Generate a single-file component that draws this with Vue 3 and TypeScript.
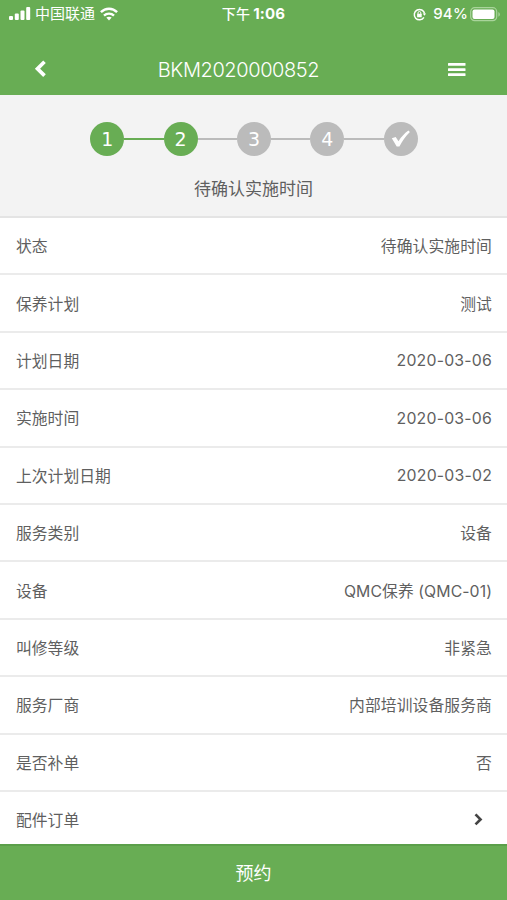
<script setup lang="ts">
interface Row {
  label: string
  value?: string
  link?: boolean
}

const steps: string[] = ['1', '2', '3', '4', 'check']
const current = 2

const rows: Row[] = [
  { label: '状态', value: '待确认实施时间' },
  { label: '保养计划', value: '测试' },
  { label: '计划日期', value: '2020-03-06' },
  { label: '实施时间', value: '2020-03-06' },
  { label: '上次计划日期', value: '2020-03-02' },
  { label: '服务类别', value: '设备' },
  { label: '设备', value: 'QMC保养 (QMC-01)' },
  { label: '叫修等级', value: '非紧急' },
  { label: '服务厂商', value: '内部培训设备服务商' },
  { label: '是否补单', value: '否' },
  { label: '配件订单', link: true },
]

const isDate = (value?: string): boolean => /^\d{4}-/.test(value ?? '')
</script>

<template>
  <div class="screen">
    <header class="top">
      <div class="status">
        <div class="carrier">
          <svg class="signal" width="22" height="14" viewBox="0 0 22 14" fill="#fff">
            <rect x="0" y="9" width="4" height="4" rx="1" />
            <rect x="5.8" y="6.5" width="4" height="6.5" rx="1" />
            <rect x="11.5" y="3.5" width="4" height="9.5" rx="1" />
            <rect x="17.2" y="0" width="4" height="13" rx="1" />
          </svg>
          <span class="operator">中国联通</span>
          <svg class="wifi" width="18" height="14" viewBox="0 0 18 14" fill="none" stroke="#fff" stroke-width="2.4">
            <path d="M.9 5.2C5.5.6 12.5.6 17.1 5.2" />
            <path d="M4 8.6c2.8-2.7 7.2-2.7 10 0" />
            <path d="M6.3 10.6c1.6-1.3 3.8-1.3 5.4 0L9 13.4z" fill="#fff" stroke="none" />
          </svg>
        </div>
        <div class="clock"><span class="period">下午</span><span>1:06</span></div>
        <div class="power">
          <svg width="13" height="13" viewBox="0 0 13 13" fill="none" stroke="#fff">
            <path d="M10.9 9.4A5.2 5.2 0 1 1 11.6 5.7" stroke-width="1.5" />
            <path d="M9.7 5.4h3.3l-1.5 2.4z" fill="#fff" stroke="none" />
            <rect x="4.1" y="5.7" width="4.6" height="3.6" rx=".5" fill="#fff" stroke="none" />
            <path d="M5 6V4.9a1.4 1.4 0 0 1 2.8 0V6" stroke-width="1" />
          </svg>
          <span class="percent">94%</span>
          <svg class="battery" width="31" height="15" viewBox="0 0 31 15">
            <rect x=".7" y=".7" width="26" height="13" rx="4" fill="none" stroke="#a9d49b" stroke-width="1.2" />
            <rect x="2.5" y="2.5" width="22" height="9.5" rx="2" fill="#fff" />
            <path d="M28.4 5v4.8c2-1 2-3.8 0-4.8z" fill="#a9d49b" />
          </svg>
        </div>
      </div>
      <div class="nav">
        <svg width="12" height="18" viewBox="0 0 12 18" fill="none" stroke="#fff" stroke-width="3.7">
          <path d="M10.5 1.8 3.500 8.700l7 6.900" />
        </svg>
        <h1>BKM2020000852</h1>
        <svg width="18" height="15" viewBox="0 0 18 15" fill="#fff">
          <rect y="1" width="17.5" height="2.7" rx=".5" />
          <rect y="6.2" width="17.5" height="2.7" rx=".5" />
          <rect y="11.3" width="17.5" height="2.7" rx=".5" />
        </svg>
      </div>
    </header>

    <section class="progress">
      <div class="steps">
        <template v-for="(step, i) in steps" :key="step">
          <div v-if="i > 0" class="line" :class="{ done: i < current }"></div>
          <div class="dot" :class="{ done: i < current }">
            <svg v-if="step === 'check'" width="20" height="18" viewBox="0 0 20 18" fill="#fff">
              <path d="M.8 8.200 4.700 6.900l2.800 4.300C10.300 7 13.200 3.700 17.400.6l1.500 1.300C14.600 6 11.400 10.800 8.400 16.600H5.700z" />
            </svg>
            <span v-else>{{ step }}</span>
          </div>
        </template>
      </div>
      <p>待确认实施时间</p>
    </section>

    <main class="rows">
      <div v-for="row in rows" :key="row.label" class="row">
        <span>{{ row.label }}</span>
        <svg v-if="row.link" class="chevron" width="9" height="13" viewBox="0 0 9 13" fill="none" stroke="#444" stroke-width="2.7">
          <path d="m1.500 1.400 5 5-5 5" />
        </svg>
        <span v-else class="value" :class="{ date: isDate(row.value) }">{{ row.value }}</span>
      </div>
    </main>

    <button class="book" type="button">预约</button>
  </div>
</template>

<style>
body {
  margin: 0;
  overflow: hidden;
}
</style>

<style scoped>
.screen {
  display: flex;
  flex-direction: column;
  width: 507px;
  height: 900px;
  overflow: hidden;
  background: #fff;
  color: #5f5f5f;
  font-family: Inter, "Noto Sans CJK SC", sans-serif;
}
.top {
  flex: none;
  height: 95px;
  background: #68ad54;
  color: #fff;
}
.status {
  display: grid;
  grid-template-columns: 1fr auto 1fr;
  align-items: center;
  height: 28px;
  padding: 0 6px 0 9px;
  font-size: 15px;
  line-height: 28px;
}
.carrier,
.power,
.clock {
  display: flex;
  align-items: center;
}
.operator {
  margin-left: 4px;
  font-size: 15px;
}
.wifi {
  margin-left: 5px;
}
.clock {
  gap: 3px;
  margin-right: 3px;
  font-weight: 700;
  letter-spacing: 0.2px;
}
.period {
  font-size: 14px;
  font-weight: 500;
}
.power {
  justify-content: flex-end;
}
.percent {
  margin: 0 2px 0 7px;
  font-weight: 500;
  letter-spacing: 0.2px;
}
.nav {
  display: flex;
  align-items: center;
  justify-content: space-between;
  height: 54px;
  margin-top: 14px;
  padding: 0 41px 0 34px;
}
.nav svg {
  flex: none;
}
h1 {
  margin: 1px 17px 0 0;
  font-size: 20px;
  font-weight: 300;
  letter-spacing: -0.4px;
}
.top .nav {
  margin-top: 0;
  padding-top: 14px;
}
.progress {
  flex: none;
  box-sizing: border-box;
  height: 123px;
  padding-top: 27px;
  border-bottom: 2px solid #e4e4e4;
  background: #f3f3f3;
}
.steps {
  display: flex;
  align-items: center;
  justify-content: center;
  padding-left: 1px;
}
.dot {
  display: flex;
  align-items: center;
  justify-content: center;
  width: 34px;
  height: 34px;
  border-radius: 50%;
  background: #bbb;
  color: #fff;
  font-family: "DejaVu Sans", sans-serif;
  font-size: 19px;
  line-height: 34px;
}
.line {
  width: 39.400px;
  height: 2px;
  background: #bbb;
}
.dot.done,
.line.done {
  background: #68ad54;
}
.progress p {
  margin: 21px 0 0;
  font-size: 17px;
  line-height: 24px;
  text-align: center;
}
.rows {
  flex: 1;
  min-height: 0;
  overflow: hidden;
}
.row {
  display: flex;
  align-items: center;
  justify-content: space-between;
  box-sizing: border-box;
  height: 57.400px;
  padding: 0 15px 0 16px;
  border-bottom: 2px solid #ebebeb;
  font-size: 15.800px;
}
.value {
  letter-spacing: 0.080px;
}
.date {
  padding-top: 1px;
  letter-spacing: 0.220px;
}
.chevron {
  margin-right: 9px;
}
.book {
  flex: none;
  height: 56px;
  padding: 0 0 3px;
  border: 0;
  border-top: 2px solid #5b9f4a;
  background: #68ad54;
  color: #fff;
  font-family: inherit;
  font-size: 18px;
}
</style>
